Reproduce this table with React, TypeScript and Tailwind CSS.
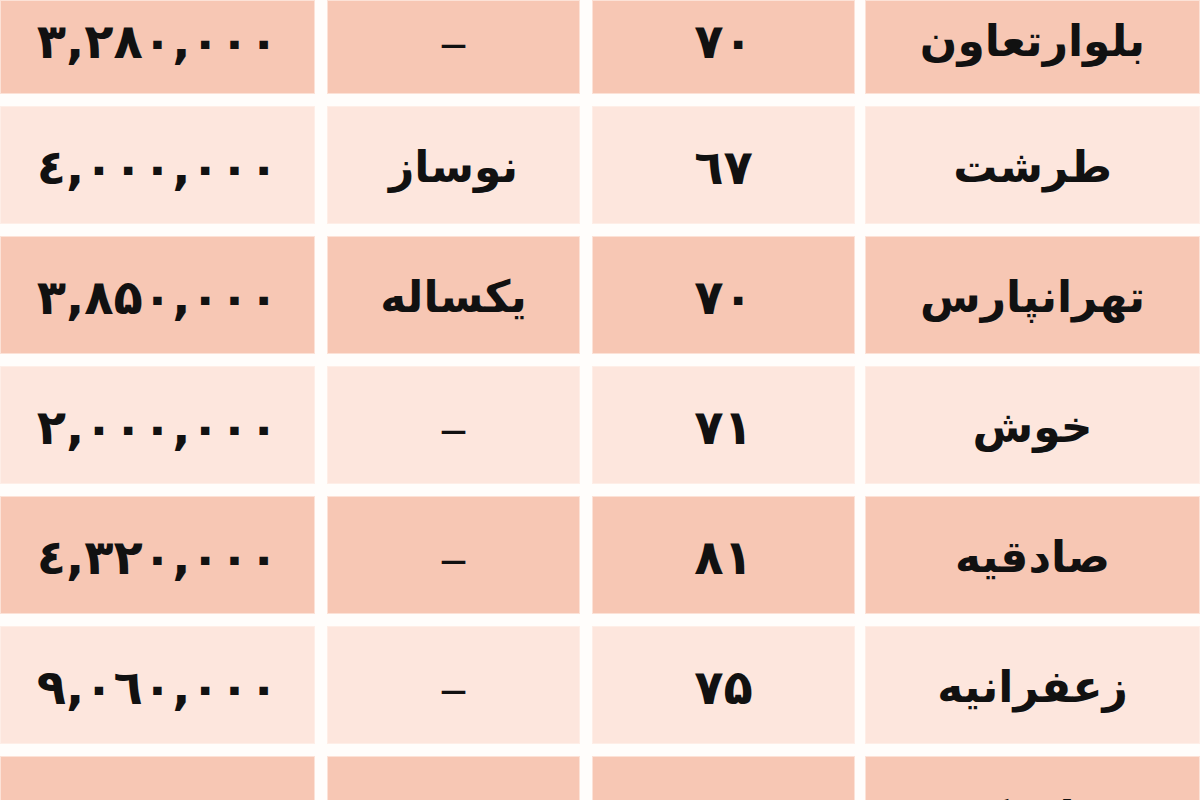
import React from "react";

type Row = { price: string; age: string; area: string; name: string };

const rows: Row[] = [
  { price: "۳,۲۸۰,۰۰۰", age: "–", area: "۷۰", name: "بلوارتعاون" },
  { price: "٤,۰۰۰,۰۰۰", age: "نوساز", area: "٦۷", name: "طرشت" },
  { price: "۳,۸۵۰,۰۰۰", age: "یکساله", area: "۷۰", name: "تهرانپارس" },
  { price: "۲,۰۰۰,۰۰۰", age: "–", area: "۷۱", name: "خوش" },
  { price: "٤,۳۲۰,۰۰۰", age: "–", area: "۸۱", name: "صادقیه" },
  { price: "۹,۰٦۰,۰۰۰", age: "–", area: "۷۵", name: "زعفرانیه" },
  { price: "۳,۸۵۰,۰۰۰", age: "۱۲", area: "۷۵", name: "ولنجک" },
];

function Cell({ children, dark, first }: { children: React.ReactNode; dark: boolean; first: boolean }) {
  return (
    <div
      className={
        "flex items-center justify-center border border-[#fff3ee]/60 text-[#111] " +
        (dark ? "bg-[#f7c7b4] " : "bg-[#fde6dd] ") +
        (first ? "h-[94px] pb-[12px]" : "h-[118px] pt-[4px]")
      }
    >
      {children}
    </div>
  );
}

export default function App() {
  return (
    <div
      className="w-[1200px] h-[800px] overflow-hidden bg-[#fffdfb]"
      style={{ fontFamily: '"DejaVu Sans", sans-serif' }}
    >
      <div className="grid grid-cols-[327px_265px_273px_335px] gap-y-[12px]">
        {rows.map((r, i) => {
          const dark = i % 2 === 0;
          const first = i === 0;
          const isDash = r.age === "–";
          return (
            <React.Fragment key={i}>
              <div className="pr-[12px]">
                <Cell dark={dark} first={first}>
                  <span className="text-[48px] font-bold leading-none" dir="ltr">{r.price}</span>
                </Cell>
              </div>
              <div className="pr-[12px]">
                <Cell dark={dark} first={first}>
                  {isDash ? (
                    <span className="text-[46px] font-bold leading-none mt-[2px]" style={{ fontFamily: '"Liberation Serif", serif' }}>
                      –
                    </span>
                  ) : (
                    <span className="text-[44px] font-bold leading-none" dir="rtl">{r.age}</span>
                  )}
                </Cell>
              </div>
              <div className="pr-[10px]">
                <Cell dark={dark} first={first}>
                  <span className="text-[48px] font-bold leading-none" dir="ltr">{r.area}</span>
                </Cell>
              </div>
              <div>
                <Cell dark={dark} first={first}>
                  <span className="text-[44px] font-bold leading-none" dir="rtl">{r.name}</span>
                </Cell>
              </div>
            </React.Fragment>
          );
        })}
      </div>
    </div>
  );
}
